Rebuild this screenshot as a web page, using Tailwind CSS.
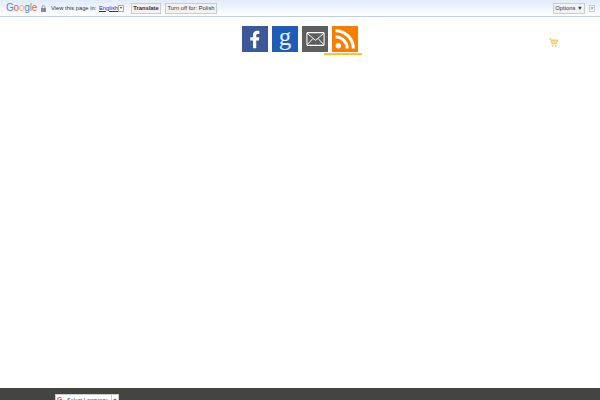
<!doctype html>
<html>
<head>
<meta charset="utf-8">
<script src="https://cdn.jsdelivr.net/npm/@tailwindcss/browser@4"></script>
</head>
<body class="bg-white">
<div class="w-[600px] h-[400px] overflow-hidden flex flex-col font-['Liberation_Sans',sans-serif]">
  <div class="h-[17px] shrink-0 bg-gradient-to-b from-[#e2ebf8] to-white border-b border-[#c3d0e0] flex items-center text-[5.8px] text-[#333] whitespace-nowrap">
    <span class="ml-[6px] w-[30px] text-[10px] leading-none tracking-[-0.2px]"><span class="text-[#4f86e8]">G</span><span class="text-[#e5604e]">o</span><span class="text-[#efbf3f]">o</span><span class="text-[#4f86e8]">g</span><span class="text-[#55b06c]">l</span><span class="text-[#e5604e]">e</span></span>
    <svg class="ml-[5px] w-[5px] h-[7px]" viewBox="0 0 5 7"><path d="M1 3V2a1.5 1.5 0 0 1 3 0v1" fill="none" stroke="#7d8ea3" stroke-width="0.8"/><rect y="3" width="5" height="4" fill="#7d8ea3"/></svg>
    <span class="ml-[5px] w-[44px]">View this page in:</span>
    <span class="ml-[4px] w-[19px] text-[#2a2aa8] underline">English</span>
    <span class="w-[6px] h-[7px] border border-[#aaa] bg-white flex items-center justify-center text-[4px] leading-none">▾</span>
    <span class="ml-[7px] h-[11px] w-[30px] flex items-center justify-center bg-[#f2f2f2] border border-[#ccc] font-bold">Translate</span>
    <span class="ml-[4px] h-[11px] w-[52px] flex items-center justify-center bg-[#f2f2f2] border border-[#ccc]">Turn off for: Polish</span>
    <span class="ml-auto h-[11px] w-[32px] flex items-center justify-center bg-[#f2f2f2] border border-[#ccc]">Options ▼</span>
    <span class="ml-[4px] mr-[5px] w-[6px] h-[7px] border border-[#ccc] text-[5px] leading-none text-[#777] flex items-center justify-center">×</span>
  </div>
  <div class="relative flex-1">
    <div class="flex justify-center gap-[4px] pt-[9px]">
      <div class="w-[26px] h-[26px] bg-[#3b5998] overflow-hidden">
        <svg class="w-[26px] h-[26px]" viewBox="0 0 27 26"><path d="M14.8 22.5v-8h2.8l.4-3.2h-3.2V9.2c0-.9.3-1.5 1.6-1.5H18V4.6c-.4 0-1.4-.1-2.5-.1-2.5 0-4.1 1.5-4.1 4.2v2.6H8.6v3.2h2.8v8z" fill="#fff"/></svg>
      </div>
      <div class="w-[26px] h-[26px] bg-[#1f5cb8] flex items-center justify-center text-[#e6f0ff] text-[25px] leading-[26px] font-['Liberation_Serif',serif] pb-[4px]">g</div>
      <div class="w-[26px] h-[26px] bg-[#5e5e5e] flex items-center justify-center">
        <svg class="w-[19px] h-[14px]" viewBox="0 0 21 16"><rect x="0.7" y="0.7" width="19.6" height="14.6" rx="1" fill="none" stroke="#fff" stroke-width="1.2"/><path d="M1 1.5l9.5 8 9.5-8M1 14.5l6.5-7M20 14.5l-6.5-7" fill="none" stroke="#fff" stroke-width="1.1"/></svg>
      </div>
      <div class="relative w-[26px] h-[26px] bg-[#f77f00] flex items-center justify-center">
        <svg class="w-[20px] h-[20px]" viewBox="0 0 21 21"><circle cx="3.4" cy="17.6" r="2.9" fill="#fff"/><path d="M0.5 8.2a12.3 12.3 0 0 1 12.3 12.3" fill="none" stroke="#fff" stroke-width="3.2"/><path d="M0.5 1.8a18.7 18.7 0 0 1 18.7 18.7" fill="none" stroke="#fff" stroke-width="3.2"/></svg>
        <div class="absolute left-[-8px] top-[27px] w-[38px] h-[2px] bg-[#f7c33b]"></div>
      </div>
    </div>
    <svg class="absolute left-[549px] top-[21px] w-[9px] h-[9px]" viewBox="0 0 9 9"><path d="M0 0.8h1.8l1.2 5h4.4L8.7 2H2.5" fill="#f6e08f" stroke="#f0c552" stroke-width="0.9"/><circle cx="3.5" cy="7.8" r="0.9" fill="#f0c552"/><circle cx="6.8" cy="7.8" r="0.9" fill="#f0c552"/></svg>
  </div>
  <div class="h-[12px] shrink-0 bg-[#444441] relative">
    <div class="absolute left-[55px] top-[6px] w-[64px] h-[12px] bg-white border border-[#ccc] flex items-start text-[5.5px] leading-[8px] text-[#333] whitespace-nowrap">
      <span class="ml-[1px] mt-[1px] w-[9px] text-[#ea4335] font-bold text-[7px] leading-none">G</span>
      <span class="ml-[1px] mt-[1px]">Select Language</span>
      <span class="ml-auto w-[7px] h-full border-l border-[#ccc] pt-[1px] text-center text-[5px]">▼</span>
    </div>
  </div>
</div>
</body>
</html>
